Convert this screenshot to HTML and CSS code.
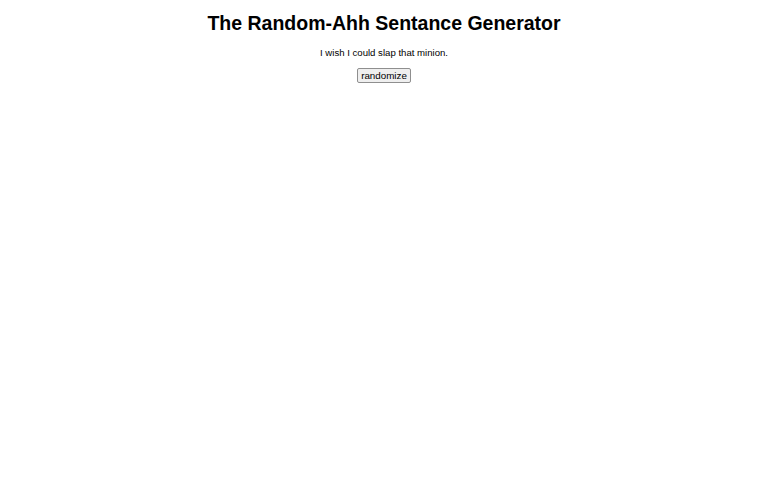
FILE: index.html
```html
<!DOCTYPE html>
<html>
<head>
  <title>The Random-Ahh Sentance Generator</title>
  <link rel="stylesheet" href="styles.css">
</head>
<body>
  <h1>The Random-Ahh Sentance Generator</h1>
  <p id="sentence">I wish I could slap that minion.</p>
  <button type="button" id="randomize">randomize</button>
</body>
</html>
```

FILE: styles.css
```css
body {
  font-family: "Liberation Sans", Arial, sans-serif;
  margin: 5px;
  text-align: center;
  background-color: #FFFFFF;
  color: #000000;
}

h1 {
  font-size: 19.5px;
  margin: 7px 0 0 0;
  line-height: 23px;
}

p {
  font-size: 9.6px;
  margin: 12px 0 0 0;
  line-height: 12px;
}

button {
  font-family: "Liberation Sans", Arial, sans-serif;
  font-size: 9.8px;
  margin-top: 9px;
  padding: 1px 3px;
  border: 1px solid #8F8F8F;
  border-radius: 2px;
  background-color: #EFEFEF;
  color: #000000;
}
```
